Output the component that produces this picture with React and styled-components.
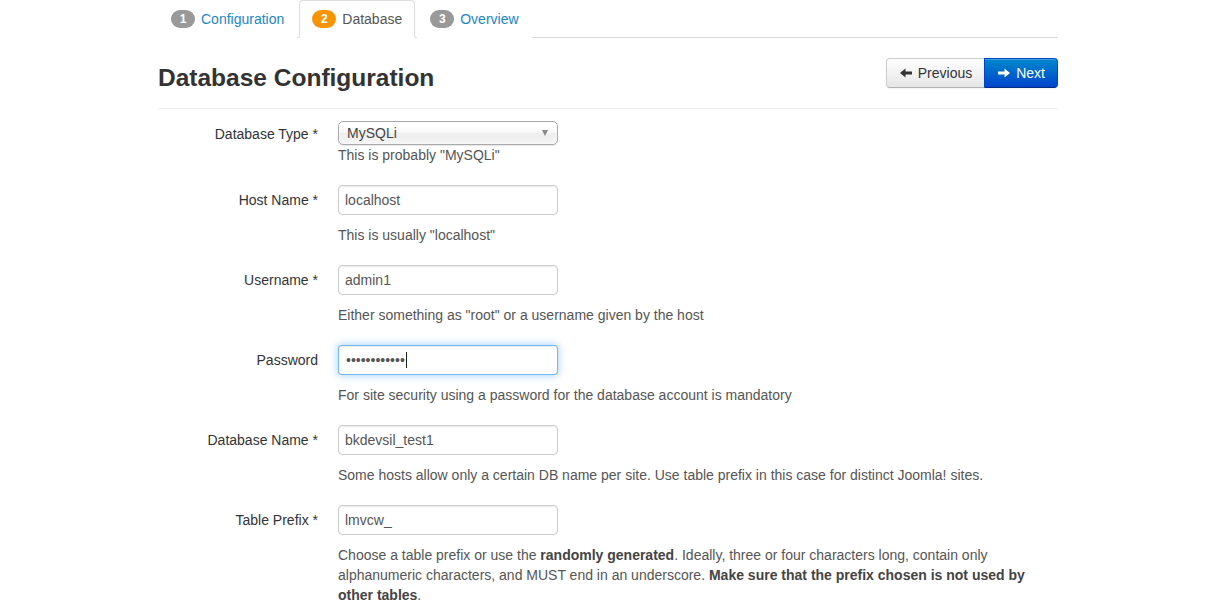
import React from "react";
import styled, { createGlobalStyle } from "styled-components";

const Global = createGlobalStyle`
  html, body { margin: 0; padding: 0; background: #fff; }
  body {
    font-family: "Liberation Sans", Arial, Helvetica, sans-serif;
    font-size: 14px;
    line-height: 20px;
    color: #333;
  }
  * { box-sizing: border-box; }
`;

const Container = styled.div`
  width: 900px;
  margin-left: 158px;
`;

const Tabs = styled.ul`
  display: flex;
  list-style: none;
  margin: 0;
  padding: 0;
  border-bottom: 1px solid #ddd;
`;

const Tab = styled.li`
  margin-right: 2px;
  margin-bottom: -1px;
`;

const TabLink = styled.a`
  display: flex;
  align-items: center;
  gap: 6px;
  padding: 8px 12px;
  line-height: 20px;
  border: 1px solid ${(p) => (p.$active ? "#ddd" : "transparent")};
  border-bottom-color: ${(p) => (p.$active ? "#fff" : "transparent")};
  border-radius: 4px 4px 0 0;
  background: #fff;
  color: ${(p) => (p.$active ? "#555" : "#1b86c9")};
  text-decoration: none;
  cursor: pointer;
`;

const Badge = styled.span`
  display: inline-block;
  min-width: 24px;
  height: 18px;
  padding: 0 8px;
  border-radius: 9px;
  background: ${(p) => (p.$active ? "#f89406" : "#999")};
  color: #fff;
  font-size: 12px;
  font-weight: bold;
  line-height: 18px;
  text-align: center;
`;

const HeaderRow = styled.div`
  display: flex;
  align-items: center;
  justify-content: space-between;
  padding: 20px 0 15px;
  border-bottom: 1px solid #eee;
  margin-bottom: 12px;
`;

const Title = styled.h3`
  margin: 0;
  font-size: 24.5px;
  line-height: 30px;
  font-weight: bold;
  color: #333;
  padding-top: 5px;
`;

const BtnGroup = styled.div`
  display: flex;
  align-self: flex-start;
`;

const Btn = styled.button`
  display: flex;
  align-items: center;
  gap: 5px;
  height: 30px;
  padding: 4px 12px;
  font-family: inherit;
  font-size: 14px;
  line-height: 20px;
  cursor: pointer;
  border: 1px solid ${(p) => (p.$primary ? "#0044cc" : "#ccc")};
  border-bottom-color: ${(p) => (p.$primary ? "#002a80" : "#b3b3b3")};
  color: ${(p) => (p.$primary ? "#fff" : "#333")};
  background: ${(p) =>
    p.$primary
      ? "linear-gradient(to bottom, #0088cc, #0044cc)"
      : "linear-gradient(to bottom, #ffffff, #e6e6e6)"};
  box-shadow: inset 0 1px 0 rgba(255,255,255,.2), 0 1px 2px rgba(0,0,0,.05);
  border-radius: ${(p) => (p.$first ? "4px 0 0 4px" : "0 4px 4px 0")};
  ${(p) => (p.$first ? "" : "margin-left: -1px;")}
`;

const Arrow = ({ dir, color }) => (
  <svg width="14" height="12" viewBox="0 0 14 12" style={{ transform: dir === "left" ? "scaleX(-1)" : "none" }}>
    <path d="M1 4.5h6.5V1.5L13 6 7.5 10.5V7.5H1z" fill={color} />
  </svg>
);

const Form = styled.form`
  margin: 0;
`;

const Group = styled.div`
  display: flex;
  margin-bottom: 20px;
`;

const Label = styled.label`
  width: 160px;
  flex: none;
  text-align: right;
  padding-top: ${(p) => (p.$select ? "3px" : "5px")};
  color: #333;
`;

const Controls = styled.div`
  margin-left: 20px;
  flex: 1;
`;

const Input = styled.input`
  display: block;
  width: 220px;
  height: 30px;
  padding: 4px 6px;
  font-family: inherit;
  font-size: 14px;
  line-height: 20px;
  color: #555;
  background: #fff;
  border: 1px solid #ccc;
  border-radius: 4px;
  box-shadow: inset 0 1px 1px rgba(0,0,0,.075);
  outline: none;
`;

const FauxInput = styled.div`
  display: flex;
  align-items: center;
  width: 220px;
  height: 30px;
  padding: 4px 7px;
  font-size: 14px;
  color: #555;
  background: #fff;
  border: 1px solid rgba(82,168,236,.8);
  border-radius: 4px;
  box-shadow: inset 0 1px 1px rgba(0,0,0,.075), 0 0 8px rgba(82,168,236,.6);
`;

const Dots = styled.span`
  color: #555;
`;

const Caret = styled.span`
  display: inline-block;
  width: 1px;
  height: 16px;
  background: #222;
  margin-left: 1px;
`;

const Select = styled.div`
  display: flex;
  align-items: center;
  justify-content: space-between;
  width: 220px;
  height: 24px;
  padding: 0 8px;
  color: #444;
  font-size: 14px;
  background: linear-gradient(to bottom, #fff 20%, #f6f6f6 50%, #eee 52%, #f4f4f4 100%);
  border: 1px solid #aaa;
  border-radius: 5px;
  box-shadow: 0 0 3px #fff inset, 0 1px 1px rgba(0,0,0,.1);
`;

const SelArrow = styled.span`
  width: 0;
  height: 0;
  border-left: 3.5px solid transparent;
  border-right: 3.5px solid transparent;
  border-top: 6px solid #888;
  margin-right: 1px;
`;

const Help = styled.p`
  margin: ${(p) => (p.$tight ? "0" : "10px")} 0 0;
  color: #555;
  line-height: 20px;
  b { color: #444; }
`;

const fields = [
  { label: "Host Name *", value: "localhost", help: 'This is usually "localhost"' },
  { label: "Username *", value: "admin1", help: 'Either something as "root" or a username given by the host' },
];

export default function App() {
  return (
    <>
      <Global />
      <Container>
        <Tabs>
          <Tab><TabLink><Badge>1</Badge>Configuration</TabLink></Tab>
          <Tab><TabLink $active><Badge $active>2</Badge>Database</TabLink></Tab>
          <Tab><TabLink><Badge>3</Badge>Overview</TabLink></Tab>
        </Tabs>
        <HeaderRow>
          <Title>Database Configuration</Title>
          <BtnGroup>
            <Btn $first type="button"><Arrow dir="left" color="#333" />Previous</Btn>
            <Btn $primary type="button"><Arrow dir="right" color="#fff" />Next</Btn>
          </BtnGroup>
        </HeaderRow>
        <Form>
          <Group>
            <Label $select>Database Type *</Label>
            <Controls>
              <Select>MySQLi<SelArrow /></Select>
              <Help $tight>This is probably "MySQLi"</Help>
            </Controls>
          </Group>
          {fields.map((f) => (
            <Group key={f.label}>
              <Label>{f.label}</Label>
              <Controls>
                <Input defaultValue={f.value} />
                <Help>{f.help}</Help>
              </Controls>
            </Group>
          ))}
          <Group>
            <Label>Password</Label>
            <Controls>
              <FauxInput><Dots>••••••••••••</Dots><Caret /></FauxInput>
              <Help>For site security using a password for the database account is mandatory</Help>
            </Controls>
          </Group>
          <Group>
            <Label>Database Name *</Label>
            <Controls>
              <Input defaultValue="bkdevsil_test1" />
              <Help>Some hosts allow only a certain DB name per site. Use table prefix in this case for distinct Joomla! sites.</Help>
            </Controls>
          </Group>
          <Group>
            <Label>Table Prefix *</Label>
            <Controls>
              <Input defaultValue="lmvcw_" />
              <Help>
                Choose a table prefix or use the <b>randomly generated</b>. Ideally, three or four characters long, contain only alphanumeric characters, and MUST end in an underscore. <b>Make sure that the prefix chosen is not used by other tables</b>.
              </Help>
            </Controls>
          </Group>
        </Form>
      </Container>
    </>
  );
}
